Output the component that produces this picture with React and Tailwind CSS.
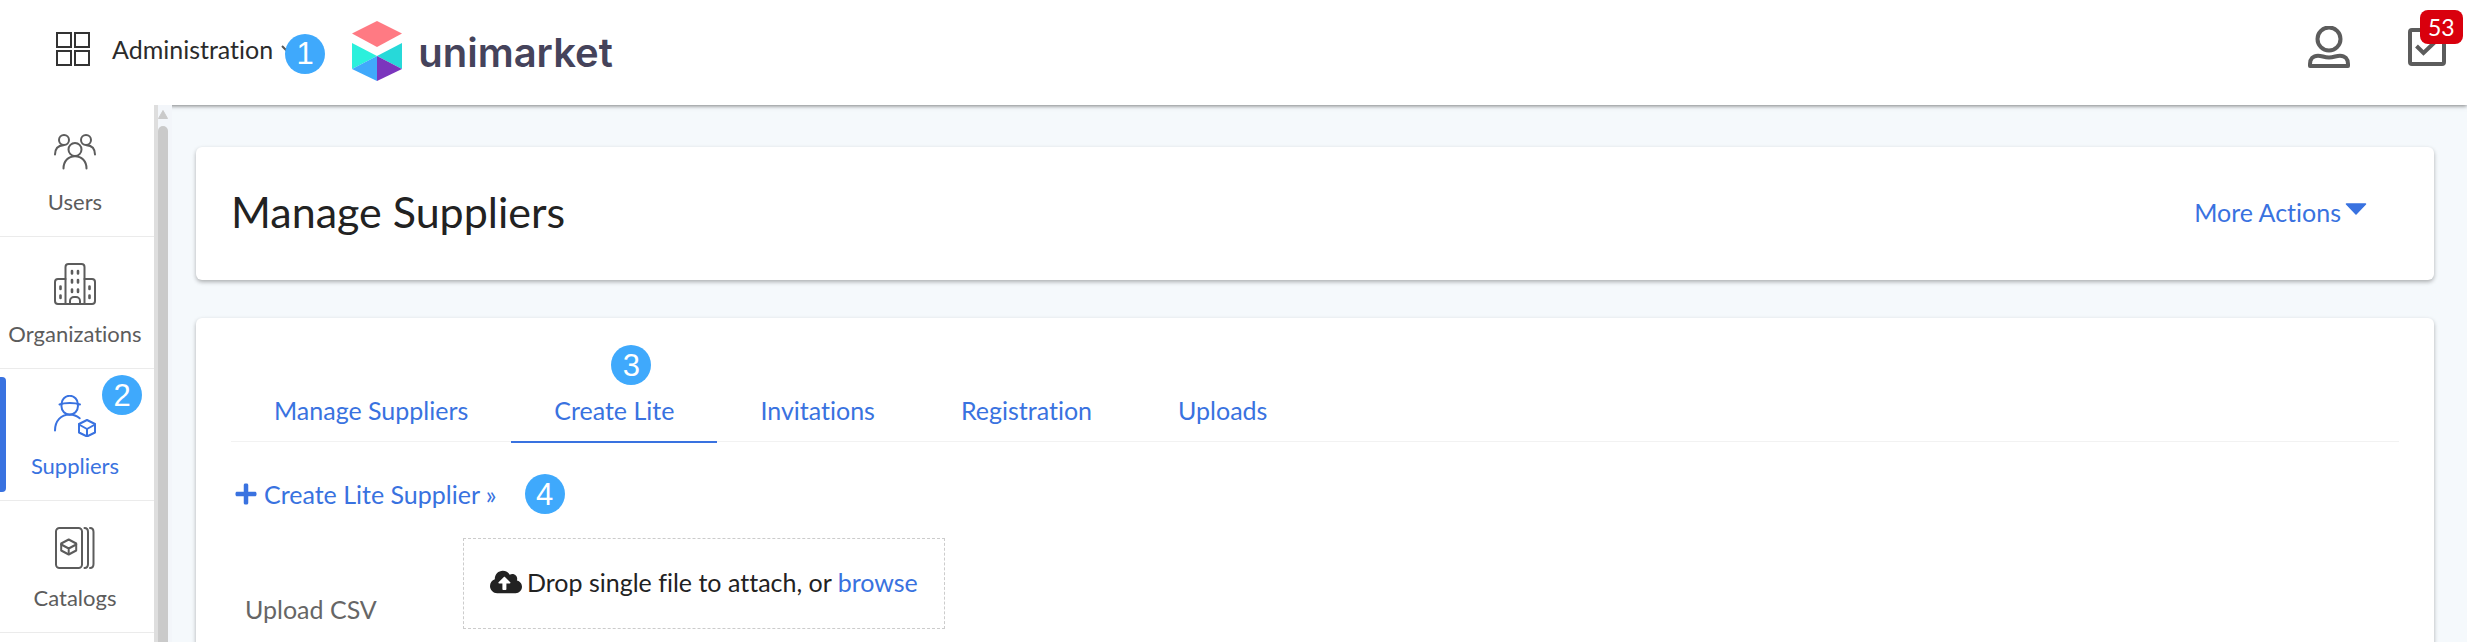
import React, { useState } from "react";
import { FaCloudUploadAlt, FaPlus } from "react-icons/fa";

const tabs = ["Manage Suppliers", "Create Lite", "Invitations", "Registration", "Uploads"];

const IconBase = ({ children }) => (
  <svg
    width="42"
    height="42"
    viewBox="0 0 42 42"
    fill="none"
    stroke="currentColor"
    strokeWidth="2"
    strokeLinecap="round"
    strokeLinejoin="round"
    aria-hidden="true"
  >
    {children}
  </svg>
);

const UsersIcon = () => (
  <IconBase>
    <circle cx="10" cy="9" r="5" />
    <circle cx="32" cy="9" r="5" />
    <circle cx="21" cy="18.5" r="6.5" />
    <path d="M1 23.5C1 18 4 14.5 9.5 14.2M41 23.5C41 18 38 14.5 32.5 14.2" />
    <path d="M9.5 37.5C9.5 30 14.5 25.2 21 25.2S32.5 30 32.5 37.5" />
  </IconBase>
);

const OrganizationsIcon = () => (
  <IconBase>
    <path d="M11.5 41V4a3 3 0 0 1 3-3h13a3 3 0 0 1 3 3v37" />
    <path d="M11.5 16H4a3 3 0 0 0-3 3v19a3 3 0 0 0 3 3h34a3 3 0 0 0 3-3V19a3 3 0 0 0-3-3h-7.5" />
    <path d="M16 41v-3a4 4 0 0 1 4-4h2a4 4 0 0 1 4 4v3" />
    <path
      strokeWidth="2.6"
      d="M18 8v2.5M24 8v2.5M18 17v2.5M24 17v2.5M18 26.5v2.5M24 26.5v2.5M6.5 23.5v2.5M6.5 32.5v2.5M35.5 23.5v2.5M35.5 32.5v2.5"
    />
  </IconBase>
);

const SuppliersIcon = () => (
  <IconBase>
    <path d="M7.5 9a8.2 8.2 0 0 1 16.4 0v2.5a8.2 8.2 0 0 1-16.4 0z" />
    <path d="M5.5 9.5c5-2 15.500-2 20.5 0" />
    <path d="M1 35.5C1 26 7 19.5 15.7 19.5c4 0 7 1.2 10 3.8" />
    <path d="M33 25l8 4v8.500l-8 4-8-4V29z" />
    <path d="M25 29.5l8 4.5 8-4.5M33 34v7" />
  </IconBase>
);

const CatalogsIcon = () => (
  <IconBase>
    <rect x="2" y="1" width="26" height="40" rx="3.5" />
    <path d="M30.5 1c2.5 0 3.5 1.5 3.5 4v32c0 2.5-1 4-3.5 4M36 1c2.500 0 3.500 1.500 3.500 4v32c0 2.500-1 4-3.500 4" />
    <path d="M14.7 12.5l7.5 4v7l-7.5 4-7.5-4v-7z" />
    <path d="M7.2 17.5l7.5 4 7.5-4M14.7 21.5v5.5" />
  </IconBase>
);

const sections = [
  { name: "Users", icon: UsersIcon },
  { name: "Organizations", icon: OrganizationsIcon },
  { name: "Suppliers", icon: SuppliersIcon, step: 2 },
  { name: "Catalogs", icon: CatalogsIcon },
];

const Step = ({ number, className = "" }) => (
  <span
    className={`flex h-10 w-10 items-center justify-center rounded-full bg-[#3fa9fc] font-['Liberation_Sans',sans-serif] text-[31px] leading-none font-normal text-white ${className}`}
  >
    {number}
  </span>
);

const Logo = () => (
  <a href="#home" className="mt-1 flex items-center gap-4">
    <svg width="50" height="60" viewBox="0 0 50 60" aria-hidden="true">
      <path d="M25 0L50 12.5 25 26 0 12.5z" fill="#ff7a83" />
      <path d="M0 22l25 13L0 48z" fill="#2bf0dc" />
      <path d="M50 22L25 35l25 13z" fill="#27d9d9" />
      <path d="M25 35v25L0 48z" fill="#40a9fb" />
      <path d="M25 35v25l25-12z" fill="#7b35bd" />
    </svg>
    <span className="pt-1 font-['Inter',sans-serif] text-[40px] leading-[48px] font-semibold text-[#45435b]">
      unimarket
    </span>
  </a>
);

const Header = () => (
  <header className="relative flex h-[105px] shrink-0 items-center justify-between bg-white pr-[21px] pb-2 pl-14 shadow-[0_1px_4px_rgba(0,0,0,0.5)]">
    <div className="flex items-center gap-[59px]">
      <button type="button" className="relative flex items-center text-[25px] leading-[30px] text-[#2b2b2b]">
        <svg
          width="34"
          height="34"
          viewBox="0 0 34 34"
          fill="none"
          stroke="#333"
          strokeWidth="2"
          className="mr-[22px]"
          aria-hidden="true"
        >
          <rect x="1" y="1" width="14" height="14" />
          <rect x="19" y="1" width="14" height="14" />
          <rect x="1" y="19" width="14" height="14" />
          <rect x="19" y="19" width="14" height="14" />
        </svg>
        Administration
        <svg width="12" height="8" viewBox="0 0 12 8" fill="none" stroke="#555" strokeWidth="2" className="ml-2" aria-hidden="true">
          <path d="M1 1l5 5 5-5" />
        </svg>
        <Step number={1} className="absolute top-0.5 -right-8" />
      </button>
      <Logo />
    </div>

    <div className="mb-1 flex items-center gap-[58px] text-[#5c5c5c]">
      <button type="button" aria-label="Account">
        <svg width="42" height="42" viewBox="0 0 42 42" fill="none" stroke="currentColor" strokeWidth="4" strokeLinejoin="round">
          <circle cx="21" cy="13" r="11.5" />
          <path d="M2 40v-2c0-5 3-8.3 8-8.3 4 0 6 1.8 11 1.8s7-1.8 11-1.8c5 0 8 3.3 8 8.3v2z" />
        </svg>
      </button>
      <button type="button" aria-label="Tasks" className="relative">
        <svg width="38" height="38" viewBox="0 0 38 38" fill="none" stroke="currentColor" strokeWidth="4">
          <rect x="2" y="2" width="34" height="34" rx="2" />
          <path d="M8.5 18l7 7L28 13" />
        </svg>
        <span className="absolute -top-[18px] left-3 rounded-lg bg-[#d9000d] px-2 text-[23px] leading-[34px] text-white">
          53
        </span>
      </button>
    </div>
  </header>
);

const Sidebar = ({ active, onSelect }) => (
  <aside className="relative flex shrink-0 bg-white">
    <nav className="w-[154px]">
      {sections.map(({ name, icon: Icon, step }) => (
        <button
          key={name}
          type="button"
          onClick={() => onSelect(name)}
          className={`relative flex h-[132px] w-full flex-col items-center gap-[15px] border-b border-[#ebebeb] pt-[26px] pr-1 text-[22px] leading-7 ${
            active === name ? "text-[#3972e0]" : "text-[#5c5c5c]"
          }`}
        >
          {active === name && (
            <span className="absolute inset-y-2 left-0 w-1.5 rounded-r bg-[#3972e0]" />
          )}
          <Icon />
          {name}
          {step && <Step number={step} className="absolute top-1.5 right-3" />}
        </button>
      ))}
    </nav>
    {/* Scroll track */}
    <div className="flex w-[18px] flex-col items-start border-l-4 border-[#dedede] bg-[#f3f6fa]">
      <svg width="10" height="9" viewBox="0 0 10 9" className="mt-[5px] mb-[7px] shrink-0" aria-hidden="true">
        <path d="M5 0.5L9.5 8.5H0.5z" fill="#cacaca" stroke="#cacaca" strokeLinejoin="round" />
      </svg>
      <div className="w-2.5 flex-1 rounded-t-full bg-[#cacaca]" />
    </div>
  </aside>
);

const cardStyles = "rounded-md bg-white px-[35px] shadow-[0_2px_4px_rgba(0,0,0,0.3)]";

export default function App() {
  const [section, setSection] = useState("Suppliers");
  const [tab, setTab] = useState("Create Lite");

  return (
    <div className="flex h-screen flex-col overflow-hidden bg-[#f5f9fc] font-['Lato',sans-serif] text-[25px] leading-[30px] text-[#222] [font-variant-ligatures:none]">
      <Header />
      <div className="flex min-h-0 flex-1">
        <Sidebar active={section} onSelect={setSection} />

        <main className="flex min-w-0 flex-1 flex-col gap-[38px] pt-[42px] pr-[33px] pl-6">
          {/* Page title */}
          <section className={`flex h-[133px] shrink-0 items-center justify-between pb-1 ${cardStyles}`}>
            <h1 className="text-[43px] leading-[52px]">Manage Suppliers</h1>
            <button type="button" className="mr-8 flex items-center gap-1 text-[#3972e0]">
              More Actions
              <svg width="22" height="12" viewBox="0 0 22 12" className="mb-1.5" aria-hidden="true">
                <path d="M1.5 1h19L11 11z" fill="currentColor" stroke="currentColor" strokeWidth="1.5" strokeLinejoin="round" />
              </svg>
            </button>
          </section>

          <section className={`shrink-0 grow pt-[77px] pb-10 ${cardStyles}`}>
            <div role="tablist" className="flex border-b border-[#f2f2f2]">
              {tabs.map((name) => (
                <button
                  key={name}
                  type="button"
                  role="tab"
                  aria-selected={tab === name}
                  onClick={() => setTab(name)}
                  className={`relative -mb-0.5 border-b-2 px-[43px] pb-4 text-[#3972e0] ${
                    tab === name ? "border-[#3972e0]" : "border-transparent"
                  }`}
                >
                  {name}
                  {name === "Create Lite" && <Step number={3} className="absolute -top-[50px] left-[100px]" />}
                </button>
              ))}
            </div>

            <div className="mt-8 flex items-center gap-7 pl-1">
              <a href="#create" className="flex items-center gap-[7px] text-[#3972e0]">
                <FaPlus className="h-6 w-[22px]" />
                Create Lite Supplier »
              </a>
              <Step number={4} />
            </div>

            {/* CSV upload */}
            <div className="mt-6 flex items-end">
              <label htmlFor="csv" className="w-[232px] pb-[5px] pl-3.5 text-[#666]">
                Upload CSV
              </label>
              <div className="relative flex h-[91px] min-w-[481px] items-center border border-dashed border-[#ccc] px-[26px] pb-1">
                <FaCloudUploadAlt className="mr-[5px] h-[26px] w-8" />
                <p>
                  Drop single file to attach, or{" "}
                  <label htmlFor="csv" className="cursor-pointer text-[#3972e0]">
                    browse
                  </label>
                </p>
                <input id="csv" type="file" accept=".csv" className="sr-only" />
              </div>
            </div>
          </section>
        </main>
      </div>
    </div>
  );
}
